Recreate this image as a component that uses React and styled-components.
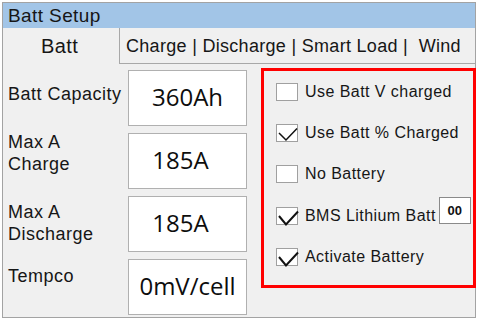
import React from "react";
import styled, { createGlobalStyle } from "styled-components";

const Global = createGlobalStyle`
  html, body { margin: 0; padding: 0; background: #ffffff; }
  * { box-sizing: border-box; }
`;

const Frame = styled.div`
  margin: 2px 0 0 2px;
  width: 474px;
  height: 316px;
  border: 1px solid #a3a3a3;
  background: #f0f0f0;
  display: flex;
  flex-direction: column;
  font-family: "Liberation Sans", Arial, sans-serif;
  color: #161616;
`;

const TitleBar = styled.div`
  height: 25px;
  background: #a2c5e7;
  font-size: 19px;
  letter-spacing: 0.4px;
  line-height: 25px;
  padding-left: 5px;
  color: #161616;
`;

const TabRow = styled.div`
  display: flex;
  height: 36px;
`;

const Tab = styled.div`
  display: flex;
  align-items: center;
  justify-content: ${(p) => (p.$active ? "center" : "flex-start")};
  white-space: pre;
  ${(p) =>
    p.$active
      ? `
    width: 117px;
    border-right: 1px solid #a8a8a8;
    font-size: 20px;
    letter-spacing: 0.4px;
    padding-right: 3px;
  `
      : `
    flex: 1;
    border-bottom: 1px solid #a8a8a8;
    font-size: 18px;
    letter-spacing: 0.3px;
    padding-left: 6px;
    padding-top: 1px;
  `}
`;

const Body = styled.div`
  display: flex;
  padding-top: 6px;
`;

const LeftColumn = styled.div`
  display: flex;
  flex-direction: column;
  gap: 7px;
  padding-left: 5px;
`;

const FieldRow = styled.div`
  display: flex;
  height: 56px;
`;

const Label = styled.div`
  width: 120px;
  margin-top: ${(p) => p.$offset}px;
  font-size: 18px;
  letter-spacing: 0.5px;
  line-height: 22px;
  white-space: nowrap;
`;

const ValueBox = styled.div`
  width: 119px;
  height: 100%;
  background: #ffffff;
  border: 1px solid #b0b0b0;
  display: flex;
  align-items: center;
  justify-content: center;
  padding-right: ${(p) => p.$shift || 0}px;
  padding-bottom: 3px;
  font-family: "Open Sans", "Noto Sans", sans-serif;
  font-weight: 500;
  font-size: 24px;
  color: #0d0d0d;
`;

const OptionsBox = styled.div`
  margin-left: 14px;
  margin-top: -2px;
  margin-right: -1px;
  width: 215px;
  height: 220px;
  border: 3px solid #ff0000;
  display: flex;
  flex-direction: column;
  padding-left: 12px;
`;

const OptionRow = styled.div`
  display: flex;
  align-items: center;
  height: 41.4px;
  font-size: 16px;
  letter-spacing: 0.45px;
  white-space: nowrap;
`;

const Box = styled.div`
  width: 22px;
  height: 18px;
  background: #ffffff;
  border: 1px solid #a0a0a0;
  margin-right: 7px;
  flex: none;
  display: flex;
`;

const SmallInput = styled.div`
  align-self: flex-start;
  margin-top: 2px;
  margin-left: 3px;
  width: 32px;
  height: 27px;
  background: #ffffff;
  border: 1px solid #8a8a8a;
  display: flex;
  align-items: center;
  justify-content: center;
  font-weight: bold;
  font-size: 13px;
  letter-spacing: 0;
  color: #111;
`;

function Check({ checked, bold }) {
  return (
    <Box>
      {checked && (
        <svg width="22" height="18" viewBox="0 0 22 18" style={{ overflow: "visible" }}>
          <polyline
            points={bold ? "2,8 9,16.5 21,3.5" : "2,8 9,15 20,3.5"}
            fill="none"
            stroke="#111"
            strokeWidth={bold ? 2 : 1.5}
          />
        </svg>
      )}
    </Box>
  );
}

const fields = [
  { label: ["Batt Capacity"], value: "360Ah", offset: 13, shift: 0 },
  { label: ["Max A", "Charge"], value: "185A", offset: -2, shift: 14 },
  { label: ["Max A", "Discharge"], value: "185A", offset: 5, shift: 14 },
  { label: ["Tempco"], value: "0mV/cell", offset: 6, shift: 0 },
];

const options = [
  { text: "Use Batt V charged", checked: false },
  { text: "Use Batt % Charged", checked: true },
  { text: "No Battery", checked: false },
  { text: "BMS Lithium Batt", checked: true, bold: true, extra: "00" },
  { text: "Activate Battery", checked: true, bold: true },
];

export default function App() {
  return (
    <>
      <Global />
      <Frame>
        <TitleBar>Batt Setup</TitleBar>
        <TabRow>
          <Tab $active>Batt</Tab>
          <Tab>{"Charge | Discharge | Smart Load |  Wind"}</Tab>
        </TabRow>
        <Body>
          <LeftColumn>
            {fields.map((f, i) => (
              <FieldRow key={i}>
                <Label $offset={f.offset}>
                  {f.label.map((l, j) => (
                    <div key={j}>{l}</div>
                  ))}
                </Label>
                <ValueBox $shift={f.shift}>{f.value}</ValueBox>
              </FieldRow>
            ))}
          </LeftColumn>
          <OptionsBox>
            {options.map((o, i) => (
              <OptionRow key={i}>
                <Check checked={o.checked} bold={o.bold} />
                <span>{o.text}</span>
                {o.extra && <SmallInput>{o.extra}</SmallInput>}
              </OptionRow>
            ))}
          </OptionsBox>
        </Body>
      </Frame>
    </>
  );
}
